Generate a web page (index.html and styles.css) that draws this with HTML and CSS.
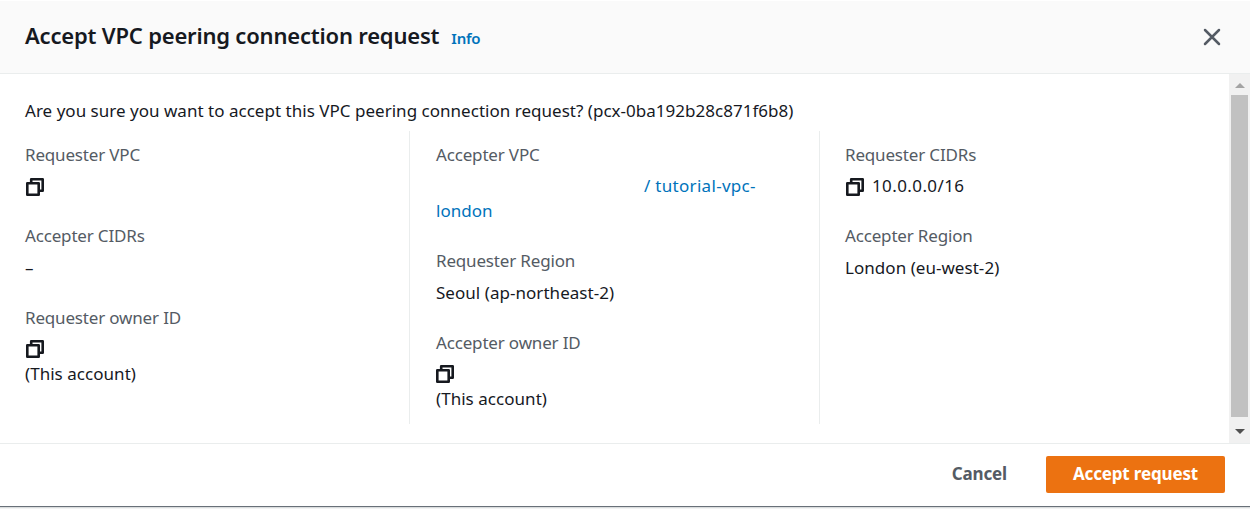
FILE: index.html
```html
<!DOCTYPE html>
<html lang="en">
<head>
<meta charset="utf-8">
<title>Accept VPC peering connection request</title>
<link rel="stylesheet" href="styles.css">
</head>
<body>
<svg class="sprite" aria-hidden="true">
  <symbol id="copy" viewBox="0 0 18 18">
    <path d="M5.2 4V1.3h11.5v11.4H14M1.3 5.3h11.4v11.4H1.3z" fill="none" stroke="currentColor" stroke-width="2.6" stroke-linejoin="round"/>
  </symbol>
</svg>
<div class="modal">
  <header class="header">
    <h1 class="title">Accept VPC peering connection request</h1>
    <a class="info">Info</a>
    <svg class="close" viewBox="0 0 18 18"><path d="M2 2l14 14M16 2L2 16" fill="none" stroke="currentColor" stroke-width="2.5" stroke-linecap="round"/></svg>
  </header>
  <div class="body">
    <main class="content">
      <p class="question">Are you sure you want to accept this VPC peering connection request? (pcx-0ba192b28c871f6b8)</p>
      <div class="columns">
        <dl class="column">
          <div class="item"><dt>Requester VPC</dt><dd><svg class="copy"><use href="#copy"/></svg></dd></div>
          <div class="item"><dt>Accepter CIDRs</dt><dd>–</dd></div>
          <div class="item"><dt>Requester owner ID</dt><dd><svg class="copy"><use href="#copy"/></svg></dd><dd>(This account)</dd></div>
        </dl>
        <dl class="column middle">
          <div class="item"><dt>Accepter VPC</dt><dd class="vpc-link"><span class="redacted"></span><a><span class="vpc-name">/ tutorial-vpc-</span><br>london</a></dd></div>
          <div class="item"><dt>Requester Region</dt><dd>Seoul (ap-northeast-2)</dd></div>
          <div class="item"><dt>Accepter owner ID</dt><dd><svg class="copy"><use href="#copy"/></svg></dd><dd>(This account)</dd></div>
        </dl>
        <dl class="column">
          <div class="item"><dt>Requester CIDRs</dt><dd class="cidr"><svg class="copy"><use href="#copy"/></svg>10.0.0.0/16</dd></div>
          <div class="item"><dt>Accepter Region</dt><dd>London (eu-west-2)</dd></div>
        </dl>
      </div>
    </main>
    <div class="scrollbar">
      <svg class="arrow up" viewBox="0 0 10 5"><path d="M0 5L5 0l5 5z" fill="currentColor"/></svg>
      <div class="thumb"></div>
      <svg class="arrow down" viewBox="0 0 10 5"><path d="M0 0h10L5 5z" fill="currentColor"/></svg>
    </div>
  </div>
  <footer class="footer">
    <button class="cancel">Cancel</button>
    <button class="accept">Accept request</button>
  </footer>
</div>
</body>
</html>
```
FILE: styles.css
```css
* { box-sizing: border-box; }
body {
  margin: 0;
  height: 509px;
  overflow: hidden;
  background: #f2f3f3;
  color: #16191f;
  font: 17px/25px "Noto Sans", "Open Sans", sans-serif;
}
.sprite { display: none; }
.modal {
  display: flex;
  flex-direction: column;
  height: 506px;
  background: #fff;
  box-shadow: 0 1px 1px #687078;
}
.header {
  display: flex;
  align-items: center;
  height: 73px;
  margin-top: 1px;
  padding: 0 29px 0 25px;
  background: #fafafa;
  border-bottom: 1px solid #eaeded;
  flex: none;
}
.title { margin: 0; padding-bottom: 5px; font-size: 22px; font-weight: 600; line-height: 30px; letter-spacing: -0.2px; }
.info { margin: 2px 0 0 12px; color: #0073bb; font-size: 15px; font-weight: 600; letter-spacing: -0.2px; }
.close { width: 18px; height: 18px; margin-left: auto; color: #545b64; }
.body { display: flex; height: 369px; flex: none; }
.content { flex: 1; padding: 24px 0 0; }
.question { margin: 0 25px 8px; letter-spacing: 0.02px; white-space: nowrap; }
.columns { display: grid; grid-template-columns: 410px 410px 409px; height: 293px; }
.column { height: 293px; margin: 0; padding: 11px 25px 0; border-right: 1px solid #eaeded; }
.column.middle { padding-left: 26px; }
.column:last-child { border-right: 0; }
.item { margin-bottom: 25px; }
.item:last-child { margin-bottom: 0; }
dt { margin-bottom: 6px; color: #545b64; letter-spacing: -0.17px; }
.item:nth-child(2) dt { margin-bottom: 7px; }
dd { display: flex; align-items: center; height: 25px; margin: 0; letter-spacing: 0.04px; white-space: nowrap; }
.copy { width: 18px; height: 18px; margin: 2px 8px 0 1px; }
.item:nth-child(3) .copy { margin-top: 0; }
.middle .item:nth-child(3) .copy { margin: 1px 8px 0 0; }
.cidr { letter-spacing: 0.4px; }
.vpc-link { display: block; height: 50px; color: #0073bb; }
.redacted { display: inline-block; width: 208px; }
.vpc-name { letter-spacing: 0.3px; }
.scrollbar {
  display: flex;
  flex-direction: column;
  align-items: center;
  width: 21px;
  padding: 9px 1px;
  background: #f1f1f1;
}
.arrow { width: 10px; height: 5px; flex: none; }
.up { color: #a3a3a3; }
.down { color: #505050; }
.thumb { width: 17px; height: 322px; margin: 7px 0 12px; background: #c1c1c1; flex: none; }
.footer {
  display: flex;
  align-items: center;
  justify-content: flex-end;
  gap: 39px;
  height: 63px;
  padding: 0 25px 2px 0;
  border-top: 1px solid #eaeded;
}
button { border: 0; padding: 0 0 2px; background: none; font: inherit; font-weight: 700; letter-spacing: -0.15px; color: #545b64; }
.accept { width: 179px; height: 37px; border-radius: 2px; background: #ec7211; color: #fff; }
```
